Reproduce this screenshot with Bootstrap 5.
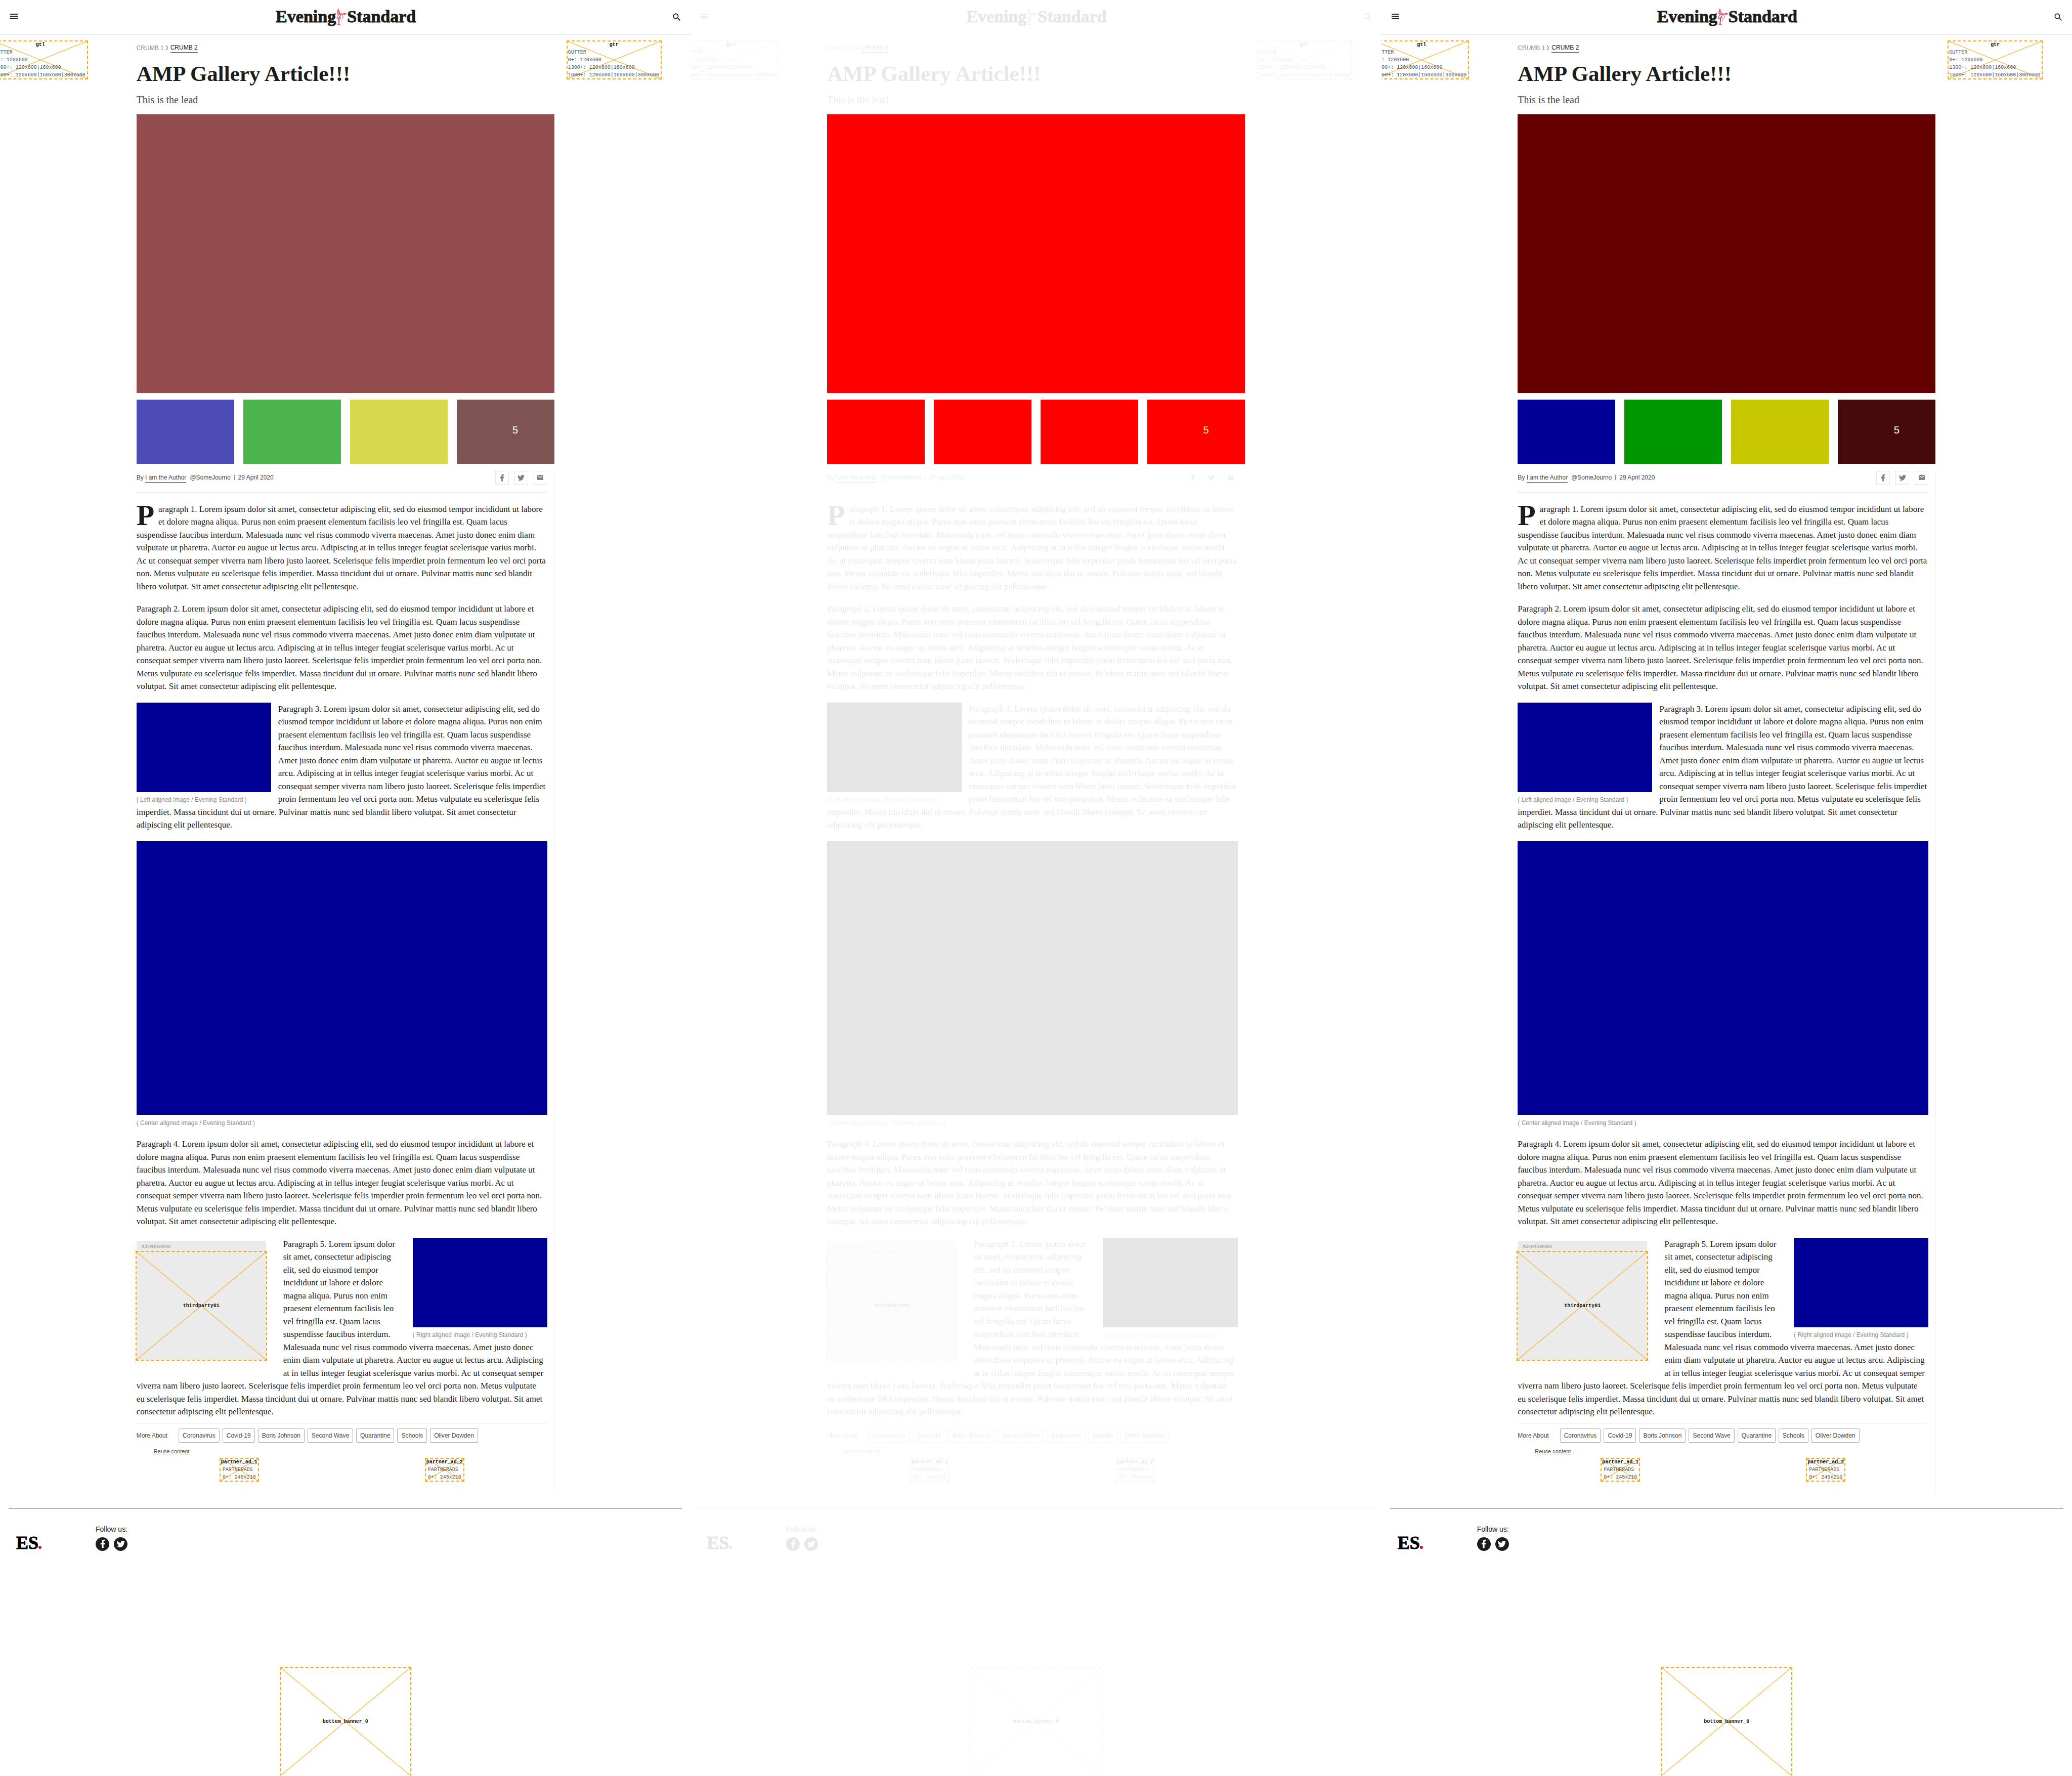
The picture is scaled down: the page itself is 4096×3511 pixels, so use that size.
<!DOCTYPE html>
<html lang="en">
<head>
<meta charset="utf-8">
<meta name="viewport" content="width=device-width, initial-scale=1">
<title>AMP Gallery Article</title>
<link href="https://cdn.jsdelivr.net/npm/bootstrap@5.3.0/dist/css/bootstrap.min.css" rel="stylesheet">
<style>
:root{--ink:#1d1d1b;--rule:#e8e8e8;--accent:#c8102e;--ad:#ffa500}
body{background:#fff;color:var(--ink);font-family:"Liberation Sans",Arial,sans-serif}
.serif{font-family:"Liberation Serif","Times New Roman",serif}
.panel{overflow:hidden}
.panel a,.panel a:hover{color:inherit}

/* header */
.site-head{height:69px;border-bottom:1px solid var(--rule);padding:0 17px 0 15px}
.icon-btn{border:0;background:none;padding:0;line-height:0;color:var(--ink)}
.masthead{font-size:34px;line-height:36px;font-weight:700;padding-bottom:2px;-webkit-text-stroke:1px currentColor}

/* ad slots */
.slot{outline:2px dashed var(--ad);font:10px/15px "Liberation Mono","Courier New",monospace;color:#555;
  background:linear-gradient(to top right,transparent calc(50% - 1px),var(--ad) 50%,transparent calc(50% + 1px)),
  linear-gradient(to bottom right,transparent calc(50% - 1px),var(--ad) 50%,transparent calc(50% + 1px))}
.slot strong{display:block;text-align:center;color:#111;text-shadow:0 0 2px #fff,0 0 2px #fff}
.slot-gutter{width:186px;padding:0 2px;white-space:nowrap;outline-offset:-1px}
.slot-partner{padding:0 2px;white-space:nowrap;outline-offset:-1px}
.slot-partner span{display:block;width:66px;margin:0 auto}
.slot-mpu{width:256px;height:213px}
.side{width:19.75%;padding-top:12px}
.side-left{padding-right:97px}
.side-right{padding-left:25px}

/* article */
.story{width:60.5%}
.crumbs{font-size:12px;line-height:18px;margin:16px 0 18px}
.crumbs li:first-child{color:#8d8d8d}
.ul-red{text-decoration:none;border-bottom:1px solid #dc0031;line-height:17px;display:inline-block}
.headline{font-size:43px;line-height:48px;font-weight:700;margin:0 0 15px}
.standfirst{font-size:20px;line-height:24px;color:#4a4a4a;margin:0 0 17px}
.hero{aspect-ratio:3/2}
.thumbs{gap:18px;margin-top:13px}
.thumb{height:127px;font-size:20px;color:#fff;width:0}
.thumb-more{padding-left:39px;padding-bottom:6px}
.g0{background:#640000}.g1{background:#000096}.g2{background:#009600}.g3{background:#c8c800}.g4{background:#460a0a}
.panel-old .g0{background:#924c4c}.panel-old .g1{background:#4c4cb4}.panel-old .g2{background:#4cb44c}.panel-old .g3{background:#d8d84c}.panel-old .g4{background:#7e5452}
.panel-diff .hero,.panel-diff .thumb{background:#f00}
.panel-diff .thumb{color:#ffff50}
.panel-diff .fades{filter:grayscale(1);opacity:.1}

.content-col{margin-top:14px;border-right:1px solid var(--rule);padding:0 13px 20px 0}
.byline{font-size:12px;line-height:18px;color:#4a4a4a;padding-bottom:15px;border-bottom:1px solid var(--rule);margin-bottom:20px}
.byline-text{gap:7px}
.byline .pipe{width:1px;height:10px;background:#888}
.panel .share{width:27px;height:27px;border:1px solid var(--rule);color:#80807d}
.share-list{gap:11px}
.copy{font-size:17px;line-height:1.5}
.copy p{margin:0 0 19px}
.dropcap::first-letter{float:left;font-size:58px;line-height:50px;font-weight:700;margin-right:8px}
.shot{background:#000096;aspect-ratio:3/2}
.fig-side{width:266px;margin:0}
.fig-left{margin-right:14px}
.fig-right{margin-left:30px}
.fig-wide{margin:0 0 20px}
.caption-text{font:12px/18px "Liberation Sans",Arial,sans-serif;color:#8d8d8d;margin-top:6px}
.fig-wide .caption-text{margin-top:7px}
.ad-inline{margin:6px 34px 24px 0;background:#ebebeb}
.ad-inline .ad-note{font-size:10px;line-height:22px;color:#999;padding-left:9px}
.copy p.last-par{margin-bottom:9px;padding-right:2px}
.topics{font-size:12px;line-height:18px;color:#4a4a4a;border-top:1px solid var(--rule);padding-top:10px;gap:6px}
.topics span{margin-right:16px}
.topic{border:1px solid #b0b0b0;border-radius:2px;padding:4px 7px;text-decoration:none}
.reuse{font-size:11px;line-height:18px;color:#4a4a4a;margin:8px 0 5px 34px}

/* footer */
.site-foot{margin:33px 17px 0;border-top:1px solid var(--ink);padding:31px 0 0 15px}
.brand-es{width:157px;font-size:36px;line-height:32px;font-weight:700;color:#000;-webkit-text-stroke:1px currentColor}
.brand-es i{display:inline-block;width:6px;height:6px;border-radius:50%;background:var(--accent)}
.follow{font-size:14px;line-height:20px}
.follow-icons{gap:9px;margin-top:6px}
.round-link{width:27px;height:27px;border-radius:50%;background:var(--ink)}
.round-link svg{color:#fff}
.bottom-ad{margin-top:231px}
</style>
<script src="https://cdn.jsdelivr.net/npm/bootstrap@5.3.0/dist/js/bootstrap.bundle.min.js"></script>
</head>
<body>
<svg width="0" height="0" class="d-none" aria-hidden="true">
  <symbol id="i-fb" viewBox="0 0 24 24"><path fill="currentColor" d="M14 13.5h2.5l1-4H14v-2c0-1.03 0-2 2-2h1.5V2.14c-.326-.043-1.557-.14-2.857-.14C11.928 2 10 3.657 10 6.7v2.8H7v4h3V22h4v-8.5z"/></symbol>
  <symbol id="i-tw" viewBox="0 0 16 16"><path fill="currentColor" d="M5.026 15c6.038 0 9.341-5.003 9.341-9.334 0-.14 0-.282-.006-.422A6.685 6.685 0 0 0 16 3.542a6.658 6.658 0 0 1-1.889.518 3.301 3.301 0 0 0 1.447-1.817 6.533 6.533 0 0 1-2.087.793A3.286 3.286 0 0 0 7.875 6.03a9.325 9.325 0 0 1-6.767-3.429 3.289 3.289 0 0 0 1.018 4.382A3.323 3.323 0 0 1 .64 6.575v.045a3.288 3.288 0 0 0 2.632 3.218 3.203 3.203 0 0 1-.865.115 3.23 3.23 0 0 1-.614-.057 3.283 3.283 0 0 0 3.067 2.277A6.588 6.588 0 0 1 .78 13.58a6.32 6.32 0 0 1-.78-.045A9.344 9.344 0 0 0 5.026 15z"/></symbol>
  <symbol id="i-mail" viewBox="0 0 12 10"><rect width="12" height="10" rx="1" fill="currentColor"/><path d="M1.5 1.5 6 5l4.500-3.500" fill="none" stroke="#fff" stroke-width="1.200"/></symbol>
  <symbol id="i-search" viewBox="0 0 24 24"><path fill="currentColor" d="M15.500 14h-.79l-.28-.27C15.410 12.590 16 11.110 16 9.500 16 5.910 13.090 3 9.500 3S3 5.910 3 9.500 5.910 16 9.500 16c1.610 0 3.090-.59 4.230-1.570l.27.28v.79l5 4.990L20.490 19l-4.990-5zm-6 0C7.010 14 5 11.990 5 9.500S7.010 5 9.500 5 14 7.010 14 9.500 11.990 14 9.500 14z"/></symbol>
  <symbol id="i-menu" viewBox="0 0 24 24"><path fill="currentColor" d="M5 5.200h15v1.800H5zM5 9.500h15v1.800H5zM5 13.800h15v1.800H5z"/></symbol>
  <symbol id="i-eros" viewBox="0 0 23 34"><g fill="none" stroke="#dc2b46" stroke-width="1" stroke-linecap="round" stroke-linejoin="round">
    <path d="M5 1C3 4 2.500 9 4 13M5 1c2 2 3 6 3 10M5 3.500c-1 3-1 6 .5 9M6 5c0 3 .5 5 1 7"/>
    <path d="M10 9.500a1.500 1.500 0 1 0 .1 0M9 12l-5 3-2 4 1 3 3-3 3-4M8 13l3 0 4-1.500M11 13l-3 5-3 4"/>
    <path d="M12 12c3-2 7-2.500 10-1-3 .5-4 2-7 2.500M14 11.500l6 .3"/>
    <path d="M5 19l1 5-1 5v3.500M7 18l0 6-.5 5v3.500M3 33.500h6M8 18l3 4M14 14c2 2 0 5-1 7M10 24l1 1"/></g></symbol>
</svg>

<main class="row g-0" id="panels"></main>

<template id="page">
  <header class="site-head d-flex align-items-center justify-content-between fades">
    <button class="icon-btn" type="button" aria-label="Menu"><svg width="24" height="24"><use href="#i-menu"/></svg></button>
    <a class="masthead serif d-flex align-items-center text-decoration-none" href="#"><span>Evening</span><svg width="22" height="34" aria-hidden="true"><use href="#i-eros"/></svg><span>Standard</span></a>
    <button class="icon-btn" type="button" aria-label="Search"><svg width="20" height="20"><use href="#i-search"/></svg></button>
  </header>
  <div class="d-flex">
    <aside class="side side-left d-flex justify-content-end align-items-start flex-shrink-0 fades">
      <div class="slot slot-gutter flex-shrink-0"><strong>gtl</strong>GUTTER<br>0+: 120x600<br>1300+: 120x600|160x600<br>1600+: 120x600|160x600|300x600</div>
    </aside>
    <article class="story flex-shrink-0">
      <div class="fades">
        <ul class="crumbs list-unstyled d-flex align-items-center">
          <li>CRUMB 1</li>
          <li class="px-1 d-flex"><svg width="5" height="11" viewBox="0 0 5 11" aria-hidden="true"><path d="M1 1l2 4.500L1 10" fill="none" stroke="currentColor"/></svg></li>
          <li><a class="ul-red" href="#">CRUMB 2</a></li>
        </ul>
        <h1 class="headline serif">AMP Gallery Article!!!</h1>
        <p class="standfirst serif">This is the lead</p>
      </div>
      <div class="hero g0"></div>
      <div class="thumbs d-flex">
        <div class="thumb g1 flex-fill"></div>
        <div class="thumb g2 flex-fill"></div>
        <div class="thumb g3 flex-fill"></div>
        <div class="thumb g4 flex-fill d-flex"><span class="thumb-more m-auto">5</span></div>
      </div>
      <div class="content-col fades">
        <div class="byline d-flex align-items-center justify-content-between">
          <div class="byline-text d-flex align-items-center">
            <span>By <a class="ul-red" href="#">I am the Author</a></span><span>@SomeJourno</span><span class="pipe"></span><time>29 April 2020</time>
          </div>
          <div class="share-list d-flex">
            <a class="share d-flex align-items-center justify-content-center" href="#" aria-label="Facebook"><svg width="17" height="17"><use href="#i-fb"/></svg></a>
            <a class="share d-flex align-items-center justify-content-center" href="#" aria-label="Twitter"><svg width="14" height="14"><use href="#i-tw"/></svg></a>
            <a class="share d-flex align-items-center justify-content-center" href="#" aria-label="Email"><svg width="12" height="10"><use href="#i-mail"/></svg></a>
          </div>
        </div>
        <div class="copy serif">
          <p class="dropcap">Paragraph 1. Lorem ipsum dolor sit amet, consectetur adipiscing elit, sed do eiusmod tempor incididunt ut labore et dolore magna aliqua. Purus non enim praesent elementum facilisis leo vel fringilla est. Quam lacus suspendisse faucibus interdum. Malesuada nunc vel risus commodo viverra maecenas. Amet justo donec enim diam vulputate ut pharetra. Auctor eu augue ut lectus arcu. Adipiscing at in tellus integer feugiat scelerisque varius morbi. Ac ut consequat semper viverra nam libero justo laoreet. Scelerisque felis imperdiet proin fermentum leo vel orci porta non. Metus vulputate eu scelerisque felis imperdiet. Massa tincidunt dui ut ornare. Pulvinar mattis nunc sed blandit libero volutpat. Sit amet consectetur adipiscing elit pellentesque.</p>
          <p>Paragraph 2. Lorem ipsum dolor sit amet, consectetur adipiscing elit, sed do eiusmod tempor incididunt ut labore et dolore magna aliqua. Purus non enim praesent elementum facilisis leo vel fringilla est. Quam lacus suspendisse faucibus interdum. Malesuada nunc vel risus commodo viverra maecenas. Amet justo donec enim diam vulputate ut pharetra. Auctor eu augue ut lectus arcu. Adipiscing at in tellus integer feugiat scelerisque varius morbi. Ac ut consequat semper viverra nam libero justo laoreet. Scelerisque felis imperdiet proin fermentum leo vel orci porta non. Metus vulputate eu scelerisque felis imperdiet. Massa tincidunt dui ut ornare. Pulvinar mattis nunc sed blandit libero volutpat. Sit amet consectetur adipiscing elit pellentesque.</p>
          <figure class="fig-side fig-left float-start"><div class="shot"></div><figcaption class="caption-text">( Left aligned image / Evening Standard )</figcaption></figure>
          <p>Paragraph 3. Lorem ipsum dolor sit amet, consectetur adipiscing elit, sed do eiusmod tempor incididunt ut labore et dolore magna aliqua. Purus non enim praesent elementum facilisis leo vel fringilla est. Quam lacus suspendisse faucibus interdum. Malesuada nunc vel risus commodo viverra maecenas. Amet justo donec enim diam vulputate ut pharetra. Auctor eu augue ut lectus arcu. Adipiscing at in tellus integer feugiat scelerisque varius morbi. Ac ut consequat semper viverra nam libero justo laoreet. Scelerisque felis imperdiet proin fermentum leo vel orci porta non. Metus vulputate eu scelerisque felis imperdiet. Massa tincidunt dui ut ornare. Pulvinar mattis nunc sed blandit libero volutpat. Sit amet consectetur adipiscing elit pellentesque.</p>
          <figure class="fig-wide"><div class="shot"></div><figcaption class="caption-text">( Center aligned image / Evening Standard )</figcaption></figure>
          <p>Paragraph 4. Lorem ipsum dolor sit amet, consectetur adipiscing elit, sed do eiusmod tempor incididunt ut labore et dolore magna aliqua. Purus non enim praesent elementum facilisis leo vel fringilla est. Quam lacus suspendisse faucibus interdum. Malesuada nunc vel risus commodo viverra maecenas. Amet justo donec enim diam vulputate ut pharetra. Auctor eu augue ut lectus arcu. Adipiscing at in tellus integer feugiat scelerisque varius morbi. Ac ut consequat semper viverra nam libero justo laoreet. Scelerisque felis imperdiet proin fermentum leo vel orci porta non. Metus vulputate eu scelerisque felis imperdiet. Massa tincidunt dui ut ornare. Pulvinar mattis nunc sed blandit libero volutpat. Sit amet consectetur adipiscing elit pellentesque.</p>
          <div class="ad-inline float-start"><div class="ad-note">Advertisement</div><div class="slot slot-mpu d-flex align-items-center justify-content-center"><strong>thirdparty01</strong></div></div>
          <figure class="fig-side fig-right float-end"><div class="shot"></div><figcaption class="caption-text">( Right aligned image / Evening Standard )</figcaption></figure>
          <p class="last-par">Paragraph 5. Lorem ipsum dolor sit amet, consectetur adipiscing elit, sed do eiusmod tempor incididunt ut labore et dolore magna aliqua. Purus non enim praesent elementum facilisis leo vel fringilla est. Quam lacus suspendisse faucibus interdum. Malesuada nunc vel risus commodo viverra maecenas. Amet justo donec enim diam vulputate ut pharetra. Auctor eu augue ut lectus arcu. Adipiscing at in tellus integer feugiat scelerisque varius morbi. Ac ut consequat semper viverra nam libero justo laoreet. Scelerisque felis imperdiet proin fermentum leo vel orci porta non. Metus vulputate eu scelerisque felis imperdiet. Massa tincidunt dui ut ornare. Pulvinar mattis nunc sed blandit libero volutpat. Sit amet consectetur adipiscing elit pellentesque.</p>
        </div>
        <div class="topics d-flex align-items-center">
          <span>More About</span>
          <a class="topic" href="#">Coronavirus</a><a class="topic" href="#">Covid-19</a><a class="topic" href="#">Boris Johnson</a><a class="topic" href="#">Second Wave</a><a class="topic" href="#">Quarantine</a><a class="topic" href="#">Schools</a><a class="topic" href="#">Oliver Dowden</a>
        </div>
        <div class="reuse"><a href="#">Reuse content</a></div>
        <div class="row g-0">
          <div class="col-6 d-flex justify-content-center"><div class="slot slot-partner"><strong>partner_ad_1</strong><span>PARTNERADS</span><span>0+: 245x210</span></div></div>
          <div class="col-6 d-flex justify-content-center"><div class="slot slot-partner"><strong>partner_ad_2</strong><span>PARTNERADS</span><span>0+: 245x210</span></div></div>
        </div>
      </div>
    </article>
    <aside class="side side-right d-flex align-items-start flex-shrink-0 fades">
      <div class="slot slot-gutter flex-shrink-0"><strong>gtr</strong>GUTTER<br>0+: 120x600<br>1300+: 120x600|160x600<br>1600+: 120x600|160x600|300x600</div>
    </aside>
  </div>
  <footer class="fades">
    <div class="site-foot d-flex align-items-end">
      <div class="brand-es serif">ES<i></i></div>
      <div class="follow">Follow us:
        <div class="follow-icons d-flex">
          <a class="round-link d-flex align-items-center justify-content-center" href="#" aria-label="Facebook"><svg width="20" height="20"><use href="#i-fb"/></svg></a>
          <a class="round-link d-flex align-items-center justify-content-center" href="#" aria-label="Twitter"><svg width="16" height="16"><use href="#i-tw"/></svg></a>
        </div>
      </div>
    </div>
    <div class="bottom-ad d-flex justify-content-center"><div class="slot slot-mpu d-flex align-items-center justify-content-center"><strong>bottom_banner_0</strong></div></div>
  </footer>
</template>
<script>
  // The same page is shown three times: earlier build, difference, current build.
  const page = document.getElementById('page');
  for (const kind of ['panel-old', 'panel-diff', 'panel-new']) {
    const panel = document.createElement('section');
    panel.className = 'panel col-4 ' + kind;
    panel.append(page.content.cloneNode(true));
    document.getElementById('panels').append(panel);
  }
</script>
</body>
</html>
